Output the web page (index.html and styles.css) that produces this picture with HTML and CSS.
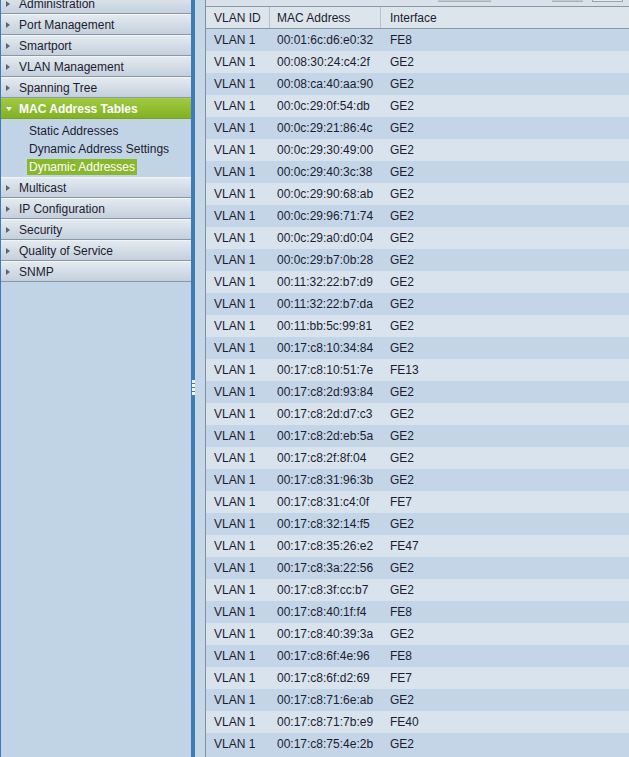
FILE: index.html
```html
<!DOCTYPE html>
<html>
<head>
<meta charset="utf-8">
<link rel="stylesheet" href="styles.css">
</head>
<body>
<div class="page">
  <nav class="sidebar">
    <div class="item"><span class="arrow"></span>Administration</div>
    <div class="item"><span class="arrow"></span>Port Management</div>
    <div class="item"><span class="arrow"></span>Smartport</div>
    <div class="item"><span class="arrow"></span>VLAN Management</div>
    <div class="item"><span class="arrow"></span>Spanning Tree</div>
    <div class="item open"><span class="arrow-down"></span>MAC Address Tables</div>
    <div class="sublist">
      <div class="sub"><span>Static Addresses</span></div>
      <div class="sub"><span>Dynamic Address Settings</span></div>
      <div class="sub"><span class="sel">Dynamic Addresses</span></div>
    </div>
    <div class="item"><span class="arrow"></span>Multicast</div>
    <div class="item"><span class="arrow"></span>IP Configuration</div>
    <div class="item"><span class="arrow"></span>Security</div>
    <div class="item"><span class="arrow"></span>Quality of Service</div>
    <div class="item"><span class="arrow"></span>SNMP</div>
  </nav>
  <div class="splitter">
    <div class="dots"><i></i><i></i><i></i><i></i></div>
  </div>
  <div class="gutter"></div>
  <main class="content">
    <div class="toolbar">
      <span class="btn b1"></span>
      <span class="btn b2"></span>
      <span class="btn b3"></span>
    </div>
    <div class="row head">
      <div class="c1">VLAN ID</div>
      <div class="c2">MAC Address</div>
      <div class="c3">Interface</div>
    </div>
    <div class="rows">
      <div class="row"><div class="c1">VLAN 1</div><div class="c2">00:01:6c:d6:e0:32</div><div class="c3">FE8</div></div>
      <div class="row"><div class="c1">VLAN 1</div><div class="c2">00:08:30:24:c4:2f</div><div class="c3">GE2</div></div>
      <div class="row"><div class="c1">VLAN 1</div><div class="c2">00:08:ca:40:aa:90</div><div class="c3">GE2</div></div>
      <div class="row"><div class="c1">VLAN 1</div><div class="c2">00:0c:29:0f:54:db</div><div class="c3">GE2</div></div>
      <div class="row"><div class="c1">VLAN 1</div><div class="c2">00:0c:29:21:86:4c</div><div class="c3">GE2</div></div>
      <div class="row"><div class="c1">VLAN 1</div><div class="c2">00:0c:29:30:49:00</div><div class="c3">GE2</div></div>
      <div class="row"><div class="c1">VLAN 1</div><div class="c2">00:0c:29:40:3c:38</div><div class="c3">GE2</div></div>
      <div class="row"><div class="c1">VLAN 1</div><div class="c2">00:0c:29:90:68:ab</div><div class="c3">GE2</div></div>
      <div class="row"><div class="c1">VLAN 1</div><div class="c2">00:0c:29:96:71:74</div><div class="c3">GE2</div></div>
      <div class="row"><div class="c1">VLAN 1</div><div class="c2">00:0c:29:a0:d0:04</div><div class="c3">GE2</div></div>
      <div class="row"><div class="c1">VLAN 1</div><div class="c2">00:0c:29:b7:0b:28</div><div class="c3">GE2</div></div>
      <div class="row"><div class="c1">VLAN 1</div><div class="c2">00:11:32:22:b7:d9</div><div class="c3">GE2</div></div>
      <div class="row"><div class="c1">VLAN 1</div><div class="c2">00:11:32:22:b7:da</div><div class="c3">GE2</div></div>
      <div class="row"><div class="c1">VLAN 1</div><div class="c2">00:11:bb:5c:99:81</div><div class="c3">GE2</div></div>
      <div class="row"><div class="c1">VLAN 1</div><div class="c2">00:17:c8:10:34:84</div><div class="c3">GE2</div></div>
      <div class="row"><div class="c1">VLAN 1</div><div class="c2">00:17:c8:10:51:7e</div><div class="c3">FE13</div></div>
      <div class="row"><div class="c1">VLAN 1</div><div class="c2">00:17:c8:2d:93:84</div><div class="c3">GE2</div></div>
      <div class="row"><div class="c1">VLAN 1</div><div class="c2">00:17:c8:2d:d7:c3</div><div class="c3">GE2</div></div>
      <div class="row"><div class="c1">VLAN 1</div><div class="c2">00:17:c8:2d:eb:5a</div><div class="c3">GE2</div></div>
      <div class="row"><div class="c1">VLAN 1</div><div class="c2">00:17:c8:2f:8f:04</div><div class="c3">GE2</div></div>
      <div class="row"><div class="c1">VLAN 1</div><div class="c2">00:17:c8:31:96:3b</div><div class="c3">GE2</div></div>
      <div class="row"><div class="c1">VLAN 1</div><div class="c2">00:17:c8:31:c4:0f</div><div class="c3">FE7</div></div>
      <div class="row"><div class="c1">VLAN 1</div><div class="c2">00:17:c8:32:14:f5</div><div class="c3">GE2</div></div>
      <div class="row"><div class="c1">VLAN 1</div><div class="c2">00:17:c8:35:26:e2</div><div class="c3">FE47</div></div>
      <div class="row"><div class="c1">VLAN 1</div><div class="c2">00:17:c8:3a:22:56</div><div class="c3">GE2</div></div>
      <div class="row"><div class="c1">VLAN 1</div><div class="c2">00:17:c8:3f:cc:b7</div><div class="c3">GE2</div></div>
      <div class="row"><div class="c1">VLAN 1</div><div class="c2">00:17:c8:40:1f:f4</div><div class="c3">FE8</div></div>
      <div class="row"><div class="c1">VLAN 1</div><div class="c2">00:17:c8:40:39:3a</div><div class="c3">GE2</div></div>
      <div class="row"><div class="c1">VLAN 1</div><div class="c2">00:17:c8:6f:4e:96</div><div class="c3">FE8</div></div>
      <div class="row"><div class="c1">VLAN 1</div><div class="c2">00:17:c8:6f:d2:69</div><div class="c3">FE7</div></div>
      <div class="row"><div class="c1">VLAN 1</div><div class="c2">00:17:c8:71:6e:ab</div><div class="c3">GE2</div></div>
      <div class="row"><div class="c1">VLAN 1</div><div class="c2">00:17:c8:71:7b:e9</div><div class="c3">FE40</div></div>
      <div class="row"><div class="c1">VLAN 1</div><div class="c2">00:17:c8:75:4e:2b</div><div class="c3">GE2</div></div>
    </div>
  </main>
</div>
</body>
</html>
```

FILE: styles.css
```css
* { box-sizing: border-box; }
html, body {
  margin: 0;
  padding: 0;
  height: 100%;
  overflow: hidden;
}
body {
  font-family: "Liberation Sans", Arial, sans-serif;
  font-size: 12px;
  color: #1c1c30;
  background: #c6d7e8;
}
.page {
  display: flex;
  height: 757px;
  overflow: hidden;
}
.sidebar {
  width: 191px;
  flex: none;
  background: #c1d4e6;
  border-left: 1px solid #3e7cb9;
  margin-top: -7px;
  height: 764px;
}
.item {
  height: 21px;
  display: flex;
  align-items: center;
  padding-left: 5px;
  background: linear-gradient(#e3eaf0, #c4d0dc);
  border-top: 1px solid #f2f5f8;
  border-bottom: 1px solid #8b98a4;
  color: #1c1c30;
  white-space: nowrap;
}
.arrow {
  width: 0;
  height: 0;
  border-left: 4px solid #5e646a;
  border-top: 3px solid transparent;
  border-bottom: 3px solid transparent;
  margin-right: 9px;
}
.item.open {
  background: linear-gradient(#9ec940, #83b124);
  border-top: 1px solid #a8d04c;
  border-bottom: 1px solid #78a41c;
  color: #ffffff;
  font-weight: bold;
}
.arrow-down {
  width: 0;
  height: 0;
  border-top: 4px solid #ffffff;
  border-left: 3px solid transparent;
  border-right: 3px solid transparent;
  margin-right: 7px;
}
.sublist {
  padding: 2px 0 2px 0;
}
.sub {
  height: 18px;
  display: flex;
  align-items: flex-end;
  padding-left: 26px;
}
.sub span {
  display: inline-block;
  line-height: 16px;
  padding: 0 2px 0 2px;
  white-space: nowrap;
}
.sub span.sel {
  background: #8ab82c;
  color: #ffffff;
}
.splitter {
  width: 4px;
  flex: none;
  background: #3e7cb9;
  display: flex;
  flex-direction: column;
  align-items: center;
  justify-content: center;
  padding-top: 18px;
}
.dots {
  display: flex;
  flex-direction: column;
  gap: 1px;
}
.dots i {
  display: block;
  width: 3px;
  height: 3px;
  background: #f4f8fc;
}
.gutter {
  width: 11px;
  flex: none;
  background: #c6d7e8;
  border-right: 1px solid #7f8f9d;
}
.content {
  flex: 1;
  min-width: 0;
  background: #c3d5e7;
  overflow: hidden;
}
.toolbar {
  height: 7px;
  background: #d9e2ea;
  border-bottom: 1px solid #8797a5;
  display: flex;
  align-items: flex-start;
  padding-left: 232px;
}
.btn {
  height: 2px;
  display: block;
}
.b1 {
  width: 53px;
  background: #c2c9d0;
  border-bottom: 1px solid #a9b2bb;
}
.b2 {
  width: 31px;
  margin-left: 61px;
  background: #c2c9d0;
  border-bottom: 1px solid #a9b2bb;
}
.b3 {
  width: 31px;
  margin-left: 9px;
  background: #e4e9ee;
  border: 1px solid #9aa4ae;
  border-top: none;
}
.row {
  display: flex;
  height: 22px;
  align-items: center;
  white-space: nowrap;
}
.rows .row:nth-child(odd) { background: #c3d5e7; }
.rows .row:nth-child(even) { background: #d8e3ee; }
.row.head {
  height: 22px;
  background: #dde5ec;
  border-bottom: 1px solid #8a99a6;
  align-items: stretch;
}
.head .c1, .head .c2, .head .c3 {
  display: flex;
  align-items: center;
}
.c1 {
  width: 63px;
  flex: none;
  padding-left: 8px;
}
.c2 {
  width: 111px;
  flex: none;
  padding-left: 7px;
  border-left: 1px solid transparent;
}
.c3 {
  flex: 1;
  padding-left: 9px;
  border-left: 1px solid transparent;
}
.head .c2, .head .c3 {
  border-left-color: #b7c2cc;
}
```
